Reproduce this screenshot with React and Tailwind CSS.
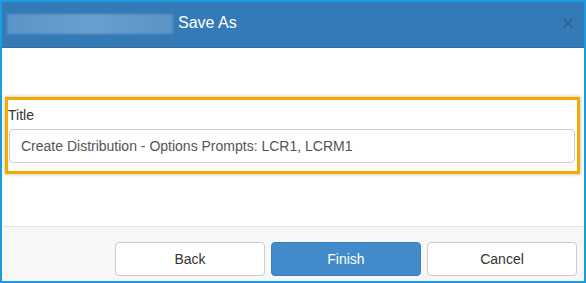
import React from "react";

export default function App() {
  return (
    <div className="w-[586px] h-[283px] border-2 border-[#1b9be0] bg-white flex flex-col font-['Liberation_Sans',Arial,sans-serif] overflow-hidden">
      {/* header */}
      <div className="h-[46px] shrink-0 bg-[#337ab7] flex items-center pl-[5px] pr-[10px] pb-[4px] border-b border-[#2e6ea5]">
        <div className="w-[166px] h-[20px] mt-[2px] bg-gradient-to-r from-[#5b94c8] via-[#6aa0cf] to-[#5a93c6] blur-[1px]" />
        <div className="ml-[5px] text-white text-[16px] leading-none">Save As</div>
        <div className="ml-auto text-[#2a5f8f] opacity-70 text-[20px] font-bold leading-none">×</div>
      </div>

      {/* body */}
      <div className="flex-1 pt-[49px] px-[3px]">
        <div className="border-[3px] border-[#f5aa00] shadow-[0_0_4px_rgba(0,0,0,0.3)] pt-[7px] pb-[8px] pl-0 pr-[2px] mr-[1px]">
          <div className="text-[14px] text-[#333] leading-[16px] mb-[6px]">Title</div>
          <div className="ml-[1px] h-[34px] border border-[#ccc] rounded-[4px] flex items-center pl-[11px] text-[14px] text-[#555]">
            Create Distribution - Options Prompts: LCR1, LCRM1
          </div>
        </div>
      </div>

      {/* footer */}
      <div className="h-[55px] shrink-0 bg-[#f7f7f7] border-t border-[#e5e5e5] flex justify-end items-start gap-[6px] pt-[15px] pr-[7px]">
        <button className="w-[150px] h-[34px] bg-white border border-[#ccc] rounded-[4px] text-[14px] text-[#333]">Back</button>
        <button className="w-[150px] h-[34px] bg-[#428bca] border border-[#3a80bd] rounded-[4px] text-[14px] text-white">Finish</button>
        <button className="w-[150px] h-[34px] bg-white border border-[#ccc] rounded-[4px] text-[14px] text-[#333]">Cancel</button>
      </div>
    </div>
  );
}
